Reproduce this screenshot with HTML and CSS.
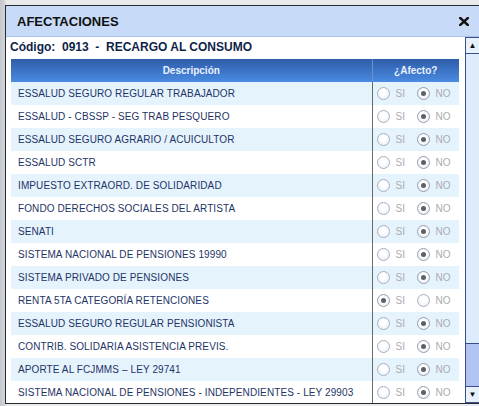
FILE: index.html
```html
<!DOCTYPE html>
<html lang="es">
<head>
    <meta charset="UTF-8">
    <title>Afectaciones</title>
    <link rel="stylesheet" href="styles.css">
</head>
<body>

<div class="dialog">
    <div class="titlebar">
        <span class="title">AFECTACIONES</span>
        <svg class="close" width="10" height="9" viewBox="0 0 10 9">
            <path d="M1.2 1 L8.8 8 M8.8 1 L1.2 8" stroke="#111" stroke-width="2.4" stroke-linecap="square"/>
        </svg>
    </div>
    <div class="content">
        <div class="main">
            <div class="codigo">Código:&nbsp; 0913 &nbsp;- &nbsp;RECARGO AL CONSUMO</div>
            <table class="grid">
                <thead>
                <tr>
                    <th class="desc">Descripción</th>
                    <th class="afecto">¿Afecto?</th>
                </tr>
                </thead>
                <tbody>
                <tr><td class="desc">ESSALUD SEGURO REGULAR TRABAJADOR</td><td class="afecto"><span class="radio"></span><span class="lbl">SI</span><span class="radio on"></span><span class="lbl">NO</span></td></tr>
                <tr><td class="desc">ESSALUD - CBSSP - SEG TRAB PESQUERO</td><td class="afecto"><span class="radio"></span><span class="lbl">SI</span><span class="radio on"></span><span class="lbl">NO</span></td></tr>
                <tr><td class="desc">ESSALUD SEGURO AGRARIO / ACUICULTOR</td><td class="afecto"><span class="radio"></span><span class="lbl">SI</span><span class="radio on"></span><span class="lbl">NO</span></td></tr>
                <tr><td class="desc">ESSALUD SCTR</td><td class="afecto"><span class="radio"></span><span class="lbl">SI</span><span class="radio on"></span><span class="lbl">NO</span></td></tr>
                <tr><td class="desc">IMPUESTO EXTRAORD. DE SOLIDARIDAD</td><td class="afecto"><span class="radio"></span><span class="lbl">SI</span><span class="radio on"></span><span class="lbl">NO</span></td></tr>
                <tr><td class="desc">FONDO DERECHOS SOCIALES DEL ARTISTA</td><td class="afecto"><span class="radio"></span><span class="lbl">SI</span><span class="radio on"></span><span class="lbl">NO</span></td></tr>
                <tr><td class="desc">SENATI</td><td class="afecto"><span class="radio"></span><span class="lbl">SI</span><span class="radio on"></span><span class="lbl">NO</span></td></tr>
                <tr><td class="desc">SISTEMA NACIONAL DE PENSIONES 19990</td><td class="afecto"><span class="radio"></span><span class="lbl">SI</span><span class="radio on"></span><span class="lbl">NO</span></td></tr>
                <tr><td class="desc">SISTEMA PRIVADO DE PENSIONES</td><td class="afecto"><span class="radio"></span><span class="lbl">SI</span><span class="radio on"></span><span class="lbl">NO</span></td></tr>
                <tr><td class="desc">RENTA 5TA CATEGORÍA RETENCIONES</td><td class="afecto"><span class="radio on"></span><span class="lbl">SI</span><span class="radio"></span><span class="lbl">NO</span></td></tr>
                <tr><td class="desc">ESSALUD SEGURO REGULAR PENSIONISTA</td><td class="afecto"><span class="radio"></span><span class="lbl">SI</span><span class="radio on"></span><span class="lbl">NO</span></td></tr>
                <tr><td class="desc">CONTRIB. SOLIDARIA ASISTENCIA PREVIS.</td><td class="afecto"><span class="radio"></span><span class="lbl">SI</span><span class="radio on"></span><span class="lbl">NO</span></td></tr>
                <tr><td class="desc">APORTE AL FCJMMS – LEY 29741</td><td class="afecto"><span class="radio"></span><span class="lbl">SI</span><span class="radio on"></span><span class="lbl">NO</span></td></tr>
                <tr><td class="desc">SISTEMA NACIONAL DE PENSIONES - INDEPENDIENTES - LEY 29903</td><td class="afecto"><span class="radio"></span><span class="lbl">SI</span><span class="radio on"></span><span class="lbl">NO</span></td></tr>
                </tbody>
            </table>
        </div>
        <div class="scrollbar">
            <div class="sbtn">&#9650;</div>
            <div class="track">
                <div class="thumb"></div>
            </div>
            <div class="sbtn">&#9660;</div>
        </div>
    </div>
</div>

</body>
</html>
```

FILE: styles.css
```css
*{
    padding: 0;
    margin: 0;
    box-sizing: border-box;
}
body{
    width: 479px;
    height: 406px;
    overflow: hidden;
    font-family: "Liberation Sans", Arial, sans-serif;
    background: linear-gradient(90deg, #c4c7cc 0, #d2d5d9 5px, #e9eaec 6px);
}
.dialog{
    margin: 5px 0 0 5px;
    width: 476px;
    height: 399px;
    border: 1px solid #262a33;
    background: #fff;
    display: flex;
    flex-direction: column;
}
.titlebar{
    height: 31px;
    flex: none;
    background: #c7daf8;
    border-bottom: 1px solid #a9c1ec;
    display: flex;
    align-items: center;
    justify-content: space-between;
    padding: 0 11px 0 11px;
}
.title{
    font-weight: bold;
    font-size: 13px;
    color: #111;
}
.close{
    display: block;
}
.content{
    flex: 1;
    display: flex;
    overflow: hidden;
}
.main{
    width: 458px;
    overflow: hidden;
    padding-top: 3px;
}
.codigo{
    margin-left: 4px;
    font-weight: bold;
    font-size: 12px;
    line-height: 15px;
    color: #0f1f4a;
    white-space: pre;
}
.grid{
    margin: 4px 0 0 5px;
    width: 448px;
    border-collapse: collapse;
    table-layout: fixed;
}
.grid th{
    height: 23px;
    font-size: 10px;
    font-weight: bold;
    color: #e9f1ff;
    background: linear-gradient(#2e5ca8, #4a8be2);
    text-align: center;
}
.grid th.desc{
    width: 361px;
    border-right: 1px solid #6f8fc4;
}
.grid td{
    height: 23px;
    font-size: 10px;
    color: #1e3466;
    white-space: nowrap;
    overflow: hidden;
}
.grid td.desc{
    padding-left: 7px;
    letter-spacing: 0.1px;
    border-right: 1px solid #6a6a6a;
}
.grid tbody tr:nth-child(odd) td{
    background: #e5f3fd;
}
.grid td.afecto{
    padding-left: 4px;
}
.afecto .radio{
    display: inline-block;
    vertical-align: middle;
    width: 13px;
    height: 13px;
    border-radius: 50%;
    border: 1px solid #a7b0c4;
    background: radial-gradient(circle at 50% 40%, #fff 30%, #e4e9f1 100%);
    position: relative;
}
.afecto .radio.on{
    border-color: #959eb2;
}
.afecto .radio.on::after{
    content: "";
    position: absolute;
    left: 3px;
    top: 3px;
    width: 5px;
    height: 5px;
    border-radius: 50%;
    background: #5e6066;
}
.afecto .lbl{
    display: inline-block;
    vertical-align: middle;
    color: #a9abb0;
    font-size: 10px;
    margin-left: 6px;
    width: 21px;
}
.scrollbar{
    margin-left: 1px;
    width: 15px;
    border: 1px solid #3b4e89;
    display: flex;
    flex-direction: column;
    background: #dcecfc;
}
.sbtn{
    height: 16px;
    flex: none;
    background: #e6f1fc;
    border-bottom: 1px solid #3b4e89;
    font-size: 8px;
    line-height: 15px;
    text-align: center;
    color: #111;
}
.sbtn:last-child{
    border-bottom: none;
    border-top: 1px solid #3b4e89;
}
.track{
    flex: 1;
    display: flex;
    flex-direction: column;
    justify-content: flex-end;
}
.thumb{
    height: 43px;
    background: #b1c3f1;
    border-top: 1px solid #3b4e89;
}
```
